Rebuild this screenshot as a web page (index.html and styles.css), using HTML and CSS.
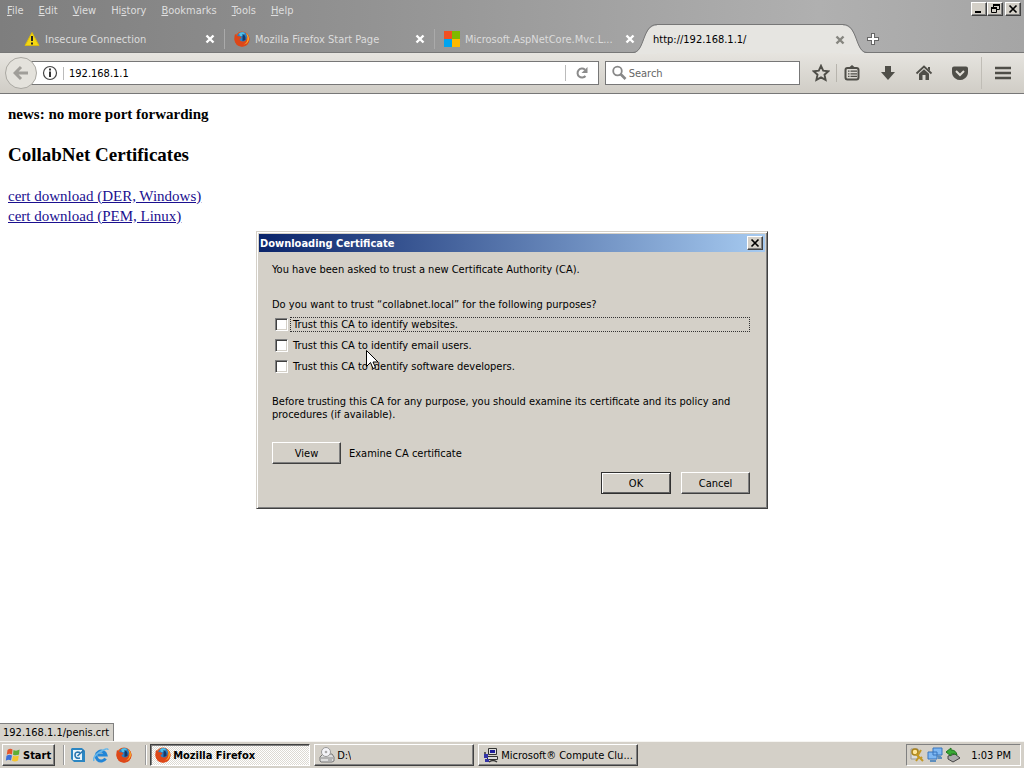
FILE: index.html
```
<!DOCTYPE html>
<html lang="en">
<head>
<meta charset="utf-8">
<title>http://192.168.1.1/</title>
<link rel="stylesheet" href="styles.css">
</head>
<body>
<svg class="defs" aria-hidden="true">
  <symbol id="firefox" viewBox="0 0 16 16">
    <circle cx="8" cy="8" r="7.500" fill="#e2571c"/>
    <circle cx="8.500" cy="6.500" r="5.500" fill="#2b7fc4"/>
    <path d="M5 2.500Q8 .5 11 2L9 5 6 5z" fill="#4fc0e8"/>
    <path d="M8.500 3Q12 4 11.500 9L8.500 10Z" fill="#163a68"/>
    <path d="M1 3Q2 3.500 3 5L6.500 5.500 7.500 7 5.500 8Q6 10.500 9 10.500 11.500 10.500 12.500 8 14 5 12 2 15.500 4 15.500 8.500 15 15 8 15.700 1 15 .4 8.500 .3 5 1 3z" fill="#dd4719"/>
    <path d="M12 2Q15.500 5 14.800 9 13.500 13 9.500 13.500 14 12 13.500 6z" fill="#fbb52b"/>
  </symbol>
  <symbol id="close" viewBox="0 0 10 10"><path d="M1.500 1.500l7 7M8.500 1.500l-7 7" stroke="currentColor" stroke-width="2.400"/></symbol>
  <symbol id="wclose" viewBox="0 0 10 10"><path d="M1.500 1.500l7 7M8.500 1.500l-7 7" stroke="#000" stroke-width="1.700"/></symbol>
</svg>

<header class="chrome">
  <div class="titlebar">
    <nav class="menus" aria-label="Menu bar">
      <button><u>F</u>ile</button><button><u>E</u>dit</button><button><u>V</u>iew</button><button>Hi<u>s</u>tory</button><button><u>B</u>ookmarks</button><button><u>T</u>ools</button><button><u>H</u>elp</button>
    </nav>
    <div class="window-buttons">
      <button aria-label="Minimize"><svg viewBox="0 0 12 10"><path d="M2 8h6" stroke="#000" stroke-width="2"/></svg></button>
      <button aria-label="Restore"><svg viewBox="0 0 12 10"><path d="M4.500 3V.5h6v5H8M4 1h7M2.500 4.500h5v4h-5zM2 4h6" fill="none" stroke="#000"/><path d="M4 1h7M2 4h6" stroke="#000" stroke-width="2"/></svg></button>
      <button class="last" aria-label="Close window"><svg viewBox="0 0 10 10"><use href="#wclose"/></svg></button>
    </div>
  </div>

  <div class="tabs">
    <div class="tab">
      <svg class="icon" viewBox="0 0 16 16"><path d="M8 1.500L15 14.500H1z" fill="#f4d711" stroke="#d8ba10" stroke-linejoin="round"/><path d="M8 5v5M8 11.500v2" stroke="#222" stroke-width="2"/></svg>
      <span class="label">Insecure Connection</span>
      <button class="tab-close" aria-label="Close tab"><svg><use href="#close"/></svg></button>
    </div>
    <div class="tab">
      <svg class="icon"><use href="#firefox"/></svg>
      <span class="label">Mozilla Firefox Start Page</span>
      <button class="tab-close" aria-label="Close tab"><svg><use href="#close"/></svg></button>
    </div>
    <div class="tab no-rule">
      <svg class="icon" viewBox="0 0 16 16"><path fill="#f25022" d="M0 0h8v8H0z"/><path fill="#7fba00" d="M8 0h8v8H8z"/><path fill="#00a4ef" d="M0 8h8v8H0z"/><path fill="#ffb900" d="M8 8h8v8H8z"/></svg>
      <span class="label">Microsoft.AspNetCore.Mvc.L...</span>
      <button class="tab-close" aria-label="Close tab"><svg><use href="#close"/></svg></button>
    </div>
    <div class="tab active">
      <svg class="curve left" viewBox="0 0 24 30"><path d="M0 30V29C12 29 9 1.500 24 1.500V30z" fill="#e6e5e1"/><path d="M0 28.500C12 28.500 9 .5 24 .5" fill="none" stroke="#777"/></svg>
      <span class="label">http://192.168.1.1/</span>
      <button class="tab-close" aria-label="Close tab"><svg><use href="#close"/></svg></button>
      <svg class="curve right" viewBox="0 0 24 30"><path d="M24 30V29C12 29 15 1.500 0 1.500V30z" fill="#e6e5e1"/><path d="M24 28.500C12 28.500 15 .5 0 .5" fill="none" stroke="#777"/></svg>
    </div>
    <button class="new-tab" aria-label="New tab"><svg viewBox="0 0 12 12"><path d="M6 0v12M0 6h12" stroke="#666" stroke-width="4"/><path d="M6 1v10M1 6h10" stroke="#fff" stroke-width="2"/></svg></button>
  </div>

  <div class="toolbar">
    <button class="back" aria-label="Back"><svg viewBox="0 0 16 16"><path d="M8 2L2 8l6 6M2.500 8H15" fill="none" stroke="#a09e99" stroke-width="3"/></svg></button>
    <div class="urlbar">
      <svg class="icon" viewBox="0 0 16 16"><circle cx="8" cy="8" r="6.500" fill="none" stroke="#444" stroke-width="1.200"/><path d="M8 3.500v2M8 6.500v5.500" stroke="#333" stroke-width="2"/></svg>
      <input type="text" value="192.168.1.1" aria-label="Address">
      <button class="reload" aria-label="Reload"><svg viewBox="0 0 14 14"><path d="M10.500 10A4.500 4.500 0 1 1 10 3.700" fill="none" stroke="#8b8b8b" stroke-width="2"/><path d="M12.500 1v6h-6z" fill="#8b8b8b"/></svg></button>
    </div>
    <div class="search">
      <svg class="icon" viewBox="0 0 16 16"><circle cx="6.500" cy="6" r="4.300" fill="none" stroke="#888" stroke-width="1.800"/><path d="M9.500 9l5 5" stroke="#888" stroke-width="2.600"/></svg>
      <input type="text" placeholder="Search" aria-label="Search">
    </div>
    <div class="tools">
      <button aria-label="Bookmark this page"><svg viewBox="0 0 18 18"><path d="M9 1.800l2.200 4.800 5.200.6-3.900 3.500 1.100 5.200L9 13.300l-4.600 2.600 1.100-5.200L1.600 7.200l5.200-.6z" fill="none" stroke="#4f4e48" stroke-width="1.900"/></svg></button>
      <button class="ruled" aria-label="Show bookmarks"><svg viewBox="0 0 18 18"><rect x="2.500" y="4" width="13" height="11.500" rx="2" fill="none" stroke="#4f4e48" stroke-width="2"/><path d="M6 3.500L9 1l3 2.500z" fill="#4f4e48"/><path d="M5 7.200h1.500M5 9.800h1.500M5 12.400h1.500M7.500 7.200H14M7.500 9.800H14M7.500 12.400H14" stroke="#4f4e48" stroke-width="1.300"/></svg></button>
      <button aria-label="Downloads"><svg viewBox="0 0 18 18"><path d="M6 2h6v6h4l-7 8-7-8h4z" fill="#4f4e48"/></svg></button>
      <button aria-label="Home"><svg viewBox="0 0 18 18"><path d="M1.500 9.500L9 2.500l7.500 7" fill="none" stroke="#4f4e48" stroke-width="1.800"/><path d="M13 3h2v4l-2-2zM4 9.800L9 5.300l5 4.500V16h-3.500v-5h-3v5H4z" fill="#4f4e48"/></svg></button>
      <button class="pocket" aria-label="Save to Pocket"><svg viewBox="0 0 18 18"><path d="M3 2.500h12q2 0 2 2V8q0 4-3 6.200Q9 18 4 14.200 1 12 1 8V4.500q0-2 2-2z" fill="#4f4e48"/><path d="M5 7l4 4 4-4" fill="none" stroke="#e0ddd6" stroke-width="2"/></svg></button>
      <button class="menu" aria-label="Open menu"><svg viewBox="0 0 18 18"><path d="M1 4h16M1 9h16M1 14h16" stroke="#4f4e48" stroke-width="2.600"/></svg></button>
    </div>
  </div>
</header>

<main class="page">
  <h4>news: no more port forwarding</h4>
  <h3>CollabNet Certificates</h3>
  <a href="#der">cert download (DER, Windows)</a><br>
  <a href="#pem">cert download (PEM, Linux)</a>
  <div class="status">192.168.1.1/penis.crt</div>
</main>

<section class="dialog" role="dialog" aria-labelledby="dialog-title">
  <div class="dialog-title">
    <h2 id="dialog-title">Downloading Certificate</h2>
    <button aria-label="Close"><svg viewBox="0 0 10 10"><use href="#wclose"/></svg></button>
  </div>
  <form class="dialog-body">
    <p class="intro">You have been asked to trust a new Certificate Authority (CA).</p>
    <p>Do you want to trust “collabnet.local” for the following purposes?</p>
    <div class="checks">
      <div class="check"><input type="checkbox" id="web"><label class="focused" for="web">Trust this CA to identify websites.</label></div>
      <div class="check"><input type="checkbox" id="mail"><label for="mail">Trust this CA to identify email users.</label></div>
      <div class="check"><input type="checkbox" id="dev"><label for="dev">Trust this CA to identify software developers.</label></div>
    </div>
    <p class="advice">Before trusting this CA for any purpose, you should examine its certificate and its policy and procedures (if available).</p>
    <div class="examine"><button type="button" class="btn">View</button><span>Examine CA certificate</span></div>
    <div class="actions"><button type="button" class="btn default">OK</button><button type="button" class="btn">Cancel</button></div>
  </form>
  <svg class="cursor" viewBox="0 0 12 20"><path d="M.5.5v16l4-4 2.500 6 2.500-1-2.500-5.500h5z" fill="#fff" stroke="#000"/></svg>
</section>

<footer class="taskbar">
  <button class="start"><svg viewBox="0 0 16 16"><path d="M2.500 3Q5 1 7.500 2.500L7 7.500Q4.500 6 1.800 7.800z" fill="#e4562b"/><path d="M8.500 3Q11.500 4.500 14.500 2.500L14 7.500Q11 9 8 7.800z" fill="#5fae35"/><path d="M1.500 8.800Q4.500 7 7 8.500L6 13.500Q3.500 12 .8 13.800z" fill="#3c6fd8"/><path d="M8 8.800Q11 10 13.800 8.500L13 13.500Q10 15.500 7 13.800z" fill="#f5c52c"/></svg>Start</button>
  <div class="quick">
    <button aria-label="Show desktop"><svg viewBox="0 0 16 16"><path d="M2 1h10l3 3v11H4l-3-3V2z" fill="#2c86c2"/><path d="M3 3h9v10H3z" fill="#e9f4fa"/><path d="M10 5.500Q5 4 5 8t5 3M14 3L7.500 9" fill="none" stroke="#2975ae" stroke-width="1.600"/></svg></button>
    <button aria-label="Internet Explorer"><svg viewBox="0 0 16 16"><path d="M12.500 11.500A5 5 0 1 1 13 8H5" fill="none" stroke="#2285d6" stroke-width="3"/><path d="M1 14Q-1 10 7 5T15 3" fill="none" stroke="#69b8ea" stroke-width="1.500"/></svg></button>
    <button aria-label="Firefox"><svg><use href="#firefox"/></svg></button>
  </div>
  <div class="tasks">
    <button class="task pressed"><svg><use href="#firefox"/></svg><span>Mozilla Firefox</span></button>
    <button class="task"><svg viewBox="0 0 16 16"><path d="M1 10l3-3h9l2 3v4l-2 1H2l-1-1z" fill="#ddd" stroke="#777"/><circle cx="7" cy="5" r="4.500" fill="#f4f4f8" stroke="#999"/><circle cx="7" cy="5" r="1.300" fill="#aaa"/><path d="M2 11h12M9 13h4" stroke="#888"/></svg><span>D:\</span></button>
    <button class="task"><svg viewBox="0 0 16 16"><path d="M5.500 1.500h8v6h-8zM4.500 9.500h10v3h-10z" fill="#ddd" stroke="#333"/><path d="M7 3h5v3H7z" fill="#1d1d9a"/><path d="M1 7h4v4H1zM2 12h4v3H2z" fill="#3434a8"/><path d="M6 15q4-3 8 0M2 5v2" fill="none" stroke="#333" stroke-width="1.500"/></svg><span>Microsoft® Compute Clu...</span></button>
  </div>
  <div class="tray">
    <svg viewBox="0 0 16 16"><path d="M2 2h7v10H2z" fill="#ddd" stroke="#999"/><circle cx="6" cy="5" r="3" fill="#ffe69a" stroke="#a8821c" stroke-width="1.500"/><path d="M7 7l7 7M10 10l-3 4M12 3l-3 5M11 12l2-2" stroke="#c39825" stroke-width="2"/></svg>
    <svg viewBox="0 0 16 16"><path d="M6 1h9v7H6zM1 5h9v7H1z" fill="#7fb8f2" stroke="#3974bd"/><path d="M10 9l4 1M3 14h6M11 11h4" stroke="#5e8ebd" stroke-width="2"/></svg>
    <svg viewBox="0 0 16 16"><path d="M3 9l7-2 5 4-7 4-5-3z" fill="#aaa" stroke="#444"/><path d="M1 5l5-4v2q5 0 6 5-3-2-6-1v2z" fill="#39a935" stroke="#207820"/></svg>
    <time>1:03 PM</time>
  </div>
</footer>
</body>
</html>
```
FILE: styles.css
```
* { box-sizing: border-box; }

body {
  margin: 0;
  min-height: 100vh;
  display: flex;
  flex-direction: column;
  position: relative;
  background: #fff;
  color: #000;
  font: 11px/13px "DejaVu Sans Condensed", "DejaVu Sans", sans-serif;
}

button, input { font: inherit; color: inherit; }
button { border: 0; padding: 0; background: none; white-space: nowrap; }
svg { display: block; flex: none; }
.defs { position: absolute; width: 0; height: 0; }
.icon { width: 16px; height: 16px; }

/* Browser chrome */
.chrome { background: linear-gradient(90deg, #7e7e7e, #929292 35%, #b0b0b0 80%, #a5a5a5); }
.titlebar { display: flex; justify-content: space-between; height: 24px; }
.menus { display: flex; gap: 15px; padding: 4px 7px; height: 20px; color: #dedede; align-items: center; }
.window-buttons { display: flex; padding: 2px 3px 0 0; }
.window-buttons button, .dialog-title button {
  display: grid;
  place-items: center;
  width: 16px;
  height: 14px;
  background: #d4d0c8;
  border: 1px solid;
  border-color: #fff #404040 #404040 #fff;
  box-shadow: inset -1px -1px #808080;
}
.window-buttons svg { width: 12px; height: 10px; }
.window-buttons .last { margin-left: 2px; }

.tabs { display: flex; height: 29px; padding-left: 15px; border-bottom: 1px solid #777; }
.tab { position: relative; display: flex; align-items: center; gap: 5px; flex: 0 1 210px; min-width: 0; padding: 2px 10px 0 9px; color: #dcdcdc; }
.tab:not(.active):not(.no-rule)::after { content: ""; align-self: stretch; width: 1px; margin: 3px -10px 3px 4px; background: #aaa; }
.tab .label { flex: 1; overflow: hidden; white-space: nowrap; }
.tab-close { color: #fff; }
.tab-close svg { width: 10px; height: 10px; }
.active { height: 29px; color: #000; padding-left: 8px; }
.active::before { content: ""; position: absolute; inset: 0 12px; background: #e6e5e1; border-top: 1px solid #777; }
.active .label, .active .tab-close { position: relative; z-index: 1; }
.active .tab-close { color: #85857f; }
.curve { position: absolute; top: 0; width: 24px; height: 30px; }
.curve.left { left: -12px; }
.curve.right { right: -12px; }
.new-tab { margin-left: 12px; padding-top: 2px; }
.new-tab svg { width: 12px; height: 12px; }

.toolbar { display: flex; align-items: center; height: 41px; padding: 0 12px 0 5px; background: linear-gradient(#e6e4df, #d0cdc6); border-bottom: 1px solid #777; }
.back { position: relative; z-index: 1; display: grid; place-items: center; width: 32px; height: 32px; margin-right: -6px; border: 1px solid #aaa8a2; border-radius: 50%; background: #e4e2dc; }
.back svg { width: 16px; height: 16px; }
.urlbar, .search { display: flex; align-items: center; height: 24px; background: #fff; border: 1px solid #777; }
.urlbar { flex: 59 1 0; padding-left: 10px; }
.search { flex: 20 1 0; margin-left: 6px; padding-left: 5px; gap: 2px; }
.toolbar input { flex: 1; min-width: 0; width: 0; border: 0; outline: 0; padding: 0; background: none; }
.urlbar input { margin-left: 5px; padding-left: 5px; border-left: 1px solid #bbb; }
.search input::placeholder { color: #666; opacity: 1; }
.reload { padding: 1px 9px; border-left: 1px solid #bbb; }
.reload svg { width: 14px; height: 14px; }
.tools { display: flex; align-items: center; margin-left: 12px; }
.tools svg { width: 18px; height: 18px; }
.tools button { padding-right: 18px; }
.tools button:first-child { padding-right: 6px; }
.tools .ruled { padding-left: 6px; border-left: 1px solid #b7b4ad; }
.tools .pocket { padding-right: 12px; }
.tools .menu { padding: 7px 0 7px 12px; border-left: 1px solid #c0bdb6; }

/* Document */
.page { position: relative; flex: 1; padding: 10px 8px; font: 15px/20px "Liberation Serif", "Times New Roman", serif; }
.page h4, .page h3 { margin: 0; }
.page h4 { font-size: 15px; }
.page h3 { margin: 21px 0; font-size: 19px; }
.page a { color: #1a0f8f; }
.status { position: absolute; left: 0; bottom: 0; padding: 2px 4px 2px 3px; font: 11px/13px "DejaVu Sans Condensed", "DejaVu Sans", sans-serif; background: #d6d3cc; border: solid #808080; border-width: 1px 1px 0 0; }

/* Dialog */
.dialog { position: absolute; top: 231px; left: 25%; width: 50%; padding: 2px; background: #d4d0c8; border: 1px solid; border-color: #d4d0c8 #404040 #404040 #d4d0c8; box-shadow: inset 1px 1px #fff, inset -1px -1px #808080; }
.dialog-title { display: flex; align-items: center; justify-content: space-between; height: 18px; padding: 0 2px 0 1px; background: linear-gradient(90deg, #0a246a, #a6caf0); }
.dialog-title h2 { margin: 0; font: bold 11px/13px "DejaVu Sans Condensed", "DejaVu Sans", sans-serif; color: #fff; }
.dialog-title svg { width: 10px; height: 10px; }
.dialog-body { padding: 11px 15px 12px 13px; }
.dialog-body p { margin: 0; }
.dialog-body .intro { margin-bottom: 22px; }
.checks { display: flex; flex-direction: column; gap: 6px; margin: 6px 0 21px; }
.check { display: flex; align-items: center; gap: 2px; padding-left: 3px; }
.check input { appearance: none; width: 13px; height: 13px; margin: 0; background: #fff; border: 1px solid; border-color: #808080 #fff #fff #808080; box-shadow: inset 1px 1px #404040, inset -1px -1px #d4d0c8; }
.check label { flex: 1; padding: 0 2px; border: 1px solid transparent; }
.check .focused { border: 1px dotted #333; }
.examine { display: flex; align-items: center; gap: 8px; margin: 21px 0 8px; }
.actions { display: flex; justify-content: flex-end; gap: 10px; }
.btn { min-width: 69px; height: 22px; background: #d4d0c8; border: 1px solid; border-color: #fff #404040 #404040 #fff; box-shadow: inset -1px -1px #808080; }
.btn.default { min-width: 70px; border-color: #303030; box-shadow: inset 1px 1px #fff, inset -1px -1px #606060; }
.cursor { position: absolute; left: 109px; top: 118px; width: 12px; height: 20px; }

/* Taskbar */
.taskbar { display: flex; align-items: center; height: 27px; padding: 1px 3px 0 2px; background: #d4d0c8; box-shadow: inset 0 1px #f6f5f2; }
.taskbar svg { width: 16px; height: 16px; }
.start, .task { display: flex; align-items: center; gap: 2px; height: 22px; padding: 0 3px 0 2px; border: 1px solid; border-color: #fff #404040 #404040 #fff; box-shadow: inset -1px -1px #808080; }
.start { font-weight: bold; }
.quick { display: flex; align-items: center; gap: 7px; margin: 0 4px 0 8px; padding: 2px 13px 2px 6px; border: solid #999; border-width: 0 1px; box-shadow: inset 1px 0 #fff, 1px 0 #fff; }
.tasks { flex: 1; display: flex; gap: 4px; min-width: 0; }
.task { flex: 0 1 160px; min-width: 0; padding-left: 4px; gap: 2px; }
.task span { overflow: hidden; white-space: nowrap; }
.pressed { font-weight: bold; background: repeating-conic-gradient(#fff 0 25%, #dcd9d2 0 50%) 0 0 / 2px 2px; border-color: #404040 #fff #fff #404040; box-shadow: inset 1px 1px #808080; }
.tray { display: flex; align-items: center; gap: 2px; height: 22px; padding: 0 9px 0 2px; border: 1px solid; border-color: #808080 #fff #fff #808080; }
.tray time { margin-left: 8px; }
```
